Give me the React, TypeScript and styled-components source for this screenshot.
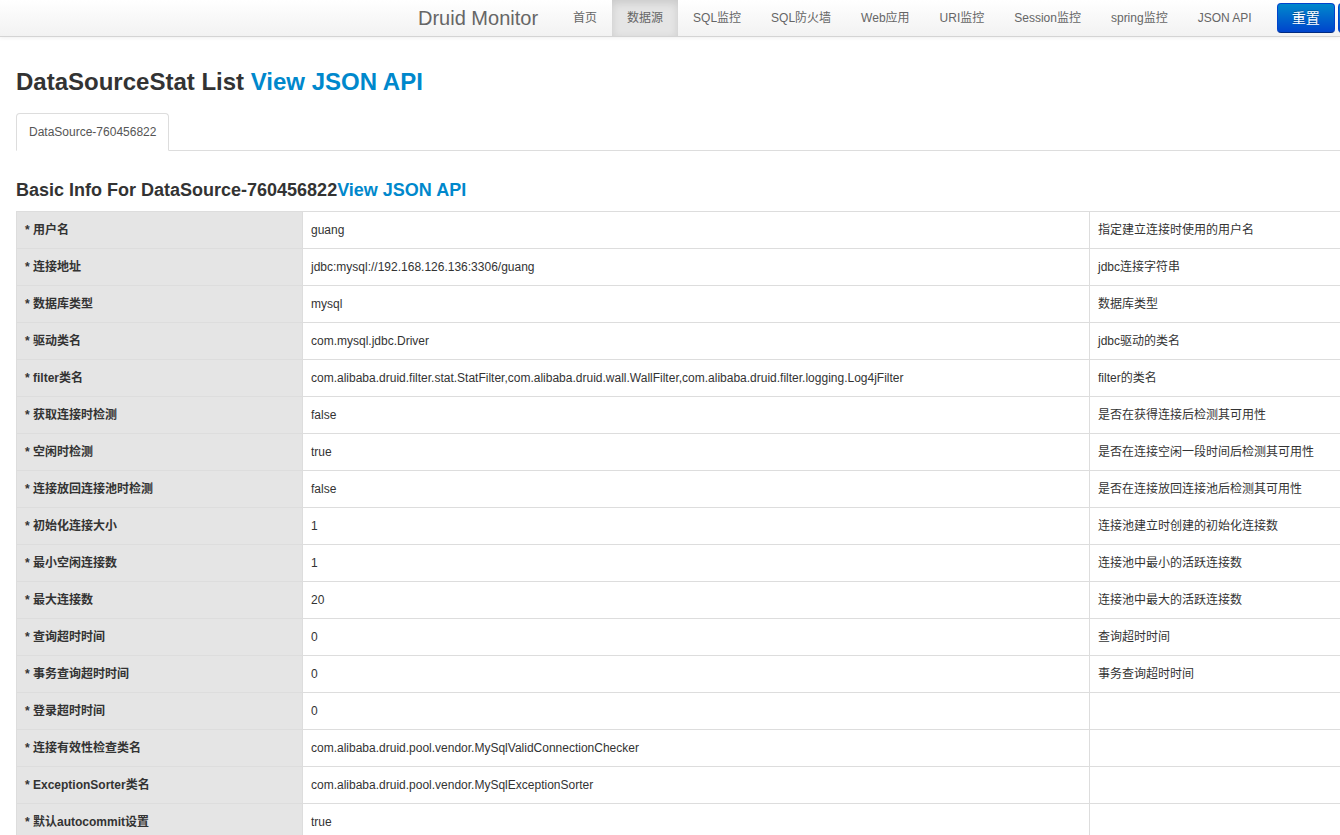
import React from "react";
import styled, { createGlobalStyle } from "styled-components";

const GlobalStyle = createGlobalStyle`
  html,
  body {
    margin: 0;
    padding: 0;
    overflow: hidden;
    background: #fff;
  }
  body {
    font-family: "Liberation Sans", Arial, "Noto Sans CJK SC", sans-serif;
    font-size: 12px;
    line-height: 20px;
    color: #333;
  }
`;

const Navbar = styled.header`
  height: 36px;
  display: flex;
  align-items: center;
  padding-left: 398px;
  background: linear-gradient(to bottom, #ffffff, #f2f2f2);
  border-bottom: 1px solid #d4d4d4;
  box-shadow: 0 1px 4px rgba(0, 0, 0, 0.065);
  overflow: hidden;
  white-space: nowrap;
`;

const Brand = styled.a`
  flex-shrink: 0;
  padding: 0 20px;
  font-size: 20px;
  line-height: 36px;
  color: #666;
  text-decoration: none;
`;

const NavList = styled.ul`
  display: flex;
  flex-shrink: 0;
  list-style: none;
  margin: 0;
  padding: 0;
`;

const NavLink = styled.a<{ $active?: boolean }>`
  display: block;
  padding: 8px 15px;
  line-height: 20px;
  font-size: 12px;
  color: #666;
  text-decoration: none;
  background: ${(p) => (p.$active ? "#e5e5e5" : "transparent")};
  box-shadow: ${(p) => (p.$active ? "inset 0 3px 8px rgba(0, 0, 0, 0.125)" : "none")};
`;

const Button = styled.a`
  flex-shrink: 0;
  display: inline-block;
  margin-left: 10px;
  padding: 4px 14px;
  font-size: 14px;
  line-height: 20px;
  color: #fff;
  text-decoration: none;
  text-shadow: 0 -1px 0 rgba(0, 0, 0, 0.25);
  background: linear-gradient(to bottom, #0088cc, #0044cc);
  border: 1px solid #0044cc;
  border-bottom-color: #002a80;
  border-radius: 4px;
  & + & {
    margin-left: 3px;
  }
`;

const Content = styled.main`
  padding: 0 16px;
  width: 1560px;
`;

const Title = styled.h2`
  margin: 25px 0 11px;
  font-size: 24px;
  line-height: 40px;
  font-weight: bold;
  color: #333;
`;

const SubTitle = styled.h3`
  margin: 29px 0 11px;
  font-size: 18px;
  line-height: 20px;
  font-weight: bold;
  color: #333;
`;

const JsonLink = styled.a`
  color: #0088cc;
  text-decoration: none;
`;

const Tabs = styled.ul`
  display: flex;
  list-style: none;
  margin: 0;
  padding: 0;
  border-bottom: 1px solid #ddd;
`;

const Tab = styled.a`
  display: block;
  margin-bottom: -1px;
  padding: 8px 12px;
  line-height: 20px;
  font-size: 12px;
  color: #555;
  text-decoration: none;
  background: #fff;
  border: 1px solid #ddd;
  border-bottom-color: transparent;
  border-radius: 4px 4px 0 0;
`;

const Table = styled.table`
  width: 100%;
  table-layout: fixed;
  border-collapse: collapse;
  border: 1px solid #ddd;
`;

const Cell = styled.td<{ $head?: boolean }>`
  padding: 8px;
  line-height: 20px;
  font-size: 12px;
  text-align: left;
  vertical-align: top;
  white-space: nowrap;
  border: 1px solid #ddd;
  font-weight: ${(p) => (p.$head ? "bold" : "normal")};
  background: ${(p) => (p.$head ? "#e5e5e5" : "#fff")};
  color: #333;
`;

const navItems = [
  "首页",
  "数据源",
  "SQL监控",
  "SQL防火墙",
  "Web应用",
  "URI监控",
  "Session监控",
  "spring监控",
  "JSON API",
];

const rows: [string, string, string][] = [
  ["用户名", "guang", "指定建立连接时使用的用户名"],
  ["连接地址", "jdbc:mysql://192.168.126.136:3306/guang", "jdbc连接字符串"],
  ["数据库类型", "mysql", "数据库类型"],
  ["驱动类名", "com.mysql.jdbc.Driver", "jdbc驱动的类名"],
  [
    "filter类名",
    "com.alibaba.druid.filter.stat.StatFilter,com.alibaba.druid.wall.WallFilter,com.alibaba.druid.filter.logging.Log4jFilter",
    "filter的类名",
  ],
  ["获取连接时检测", "false", "是否在获得连接后检测其可用性"],
  ["空闲时检测", "true", "是否在连接空闲一段时间后检测其可用性"],
  ["连接放回连接池时检测", "false", "是否在连接放回连接池后检测其可用性"],
  ["初始化连接大小", "1", "连接池建立时创建的初始化连接数"],
  ["最小空闲连接数", "1", "连接池中最小的活跃连接数"],
  ["最大连接数", "20", "连接池中最大的活跃连接数"],
  ["查询超时时间", "0", "查询超时时间"],
  ["事务查询超时时间", "0", "事务查询超时时间"],
  ["登录超时时间", "0", ""],
  ["连接有效性检查类名", "com.alibaba.druid.pool.vendor.MySqlValidConnectionChecker", ""],
  ["ExceptionSorter类名", "com.alibaba.druid.pool.vendor.MySqlExceptionSorter", ""],
  ["默认autocommit设置", "true", ""],
  ["默认只读设置", "", ""],
  ["默认事务隔离级别", "", ""],
];

const App: React.FC = () => {
  return (
    <>
      <GlobalStyle />
      <Navbar>
        <Brand href="#">Druid Monitor</Brand>
        <NavList>
          {navItems.map((item) => (
            <li key={item}>
              <NavLink href="#" $active={item === "数据源"}>
                {item}
              </NavLink>
            </li>
          ))}
        </NavList>
        <Button href="#">重置</Button>
        <Button href="#">记录日志并重置</Button>
      </Navbar>
      <Content>
        <Title>
          DataSourceStat List <JsonLink href="#">View JSON API</JsonLink>
        </Title>
        <Tabs>
          <li>
            <Tab href="#">DataSource-760456822</Tab>
          </li>
        </Tabs>
        <SubTitle>
          Basic Info For DataSource-760456822
          <JsonLink href="#">View JSON API</JsonLink>
        </SubTitle>
        <Table>
          <colgroup>
            <col style={{ width: 286 }} />
            <col style={{ width: 787 }} />
            <col />
          </colgroup>
          <tbody>
            {rows.map(([name, value, desc]) => (
              <tr key={name}>
                <Cell $head>* {name}</Cell>
                <Cell>{value}</Cell>
                <Cell>{desc}</Cell>
              </tr>
            ))}
          </tbody>
        </Table>
      </Content>
    </>
  );
};

export default App;
